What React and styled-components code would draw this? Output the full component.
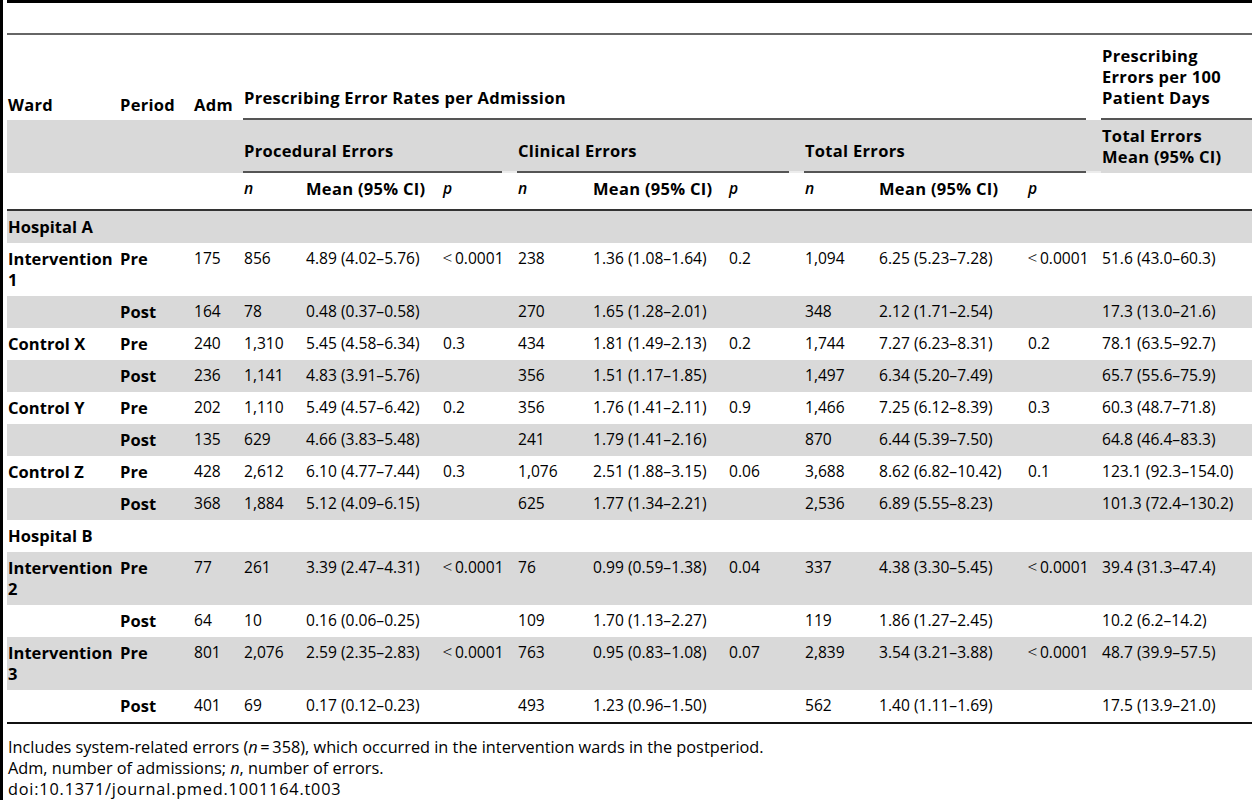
import React from "react";
import styled, { createGlobalStyle, css } from "styled-components";

const GlobalStyle = createGlobalStyle`
  html, body { margin: 0; padding: 0; background: #fff; }
  body {
    font-family: "Open Sans", "Noto Sans", "Liberation Sans", sans-serif;
    color: #000;
  }
`;

const Page = styled.div`
  box-sizing: border-box;
  min-height: 100vh;
  border-left: 3px solid #000;
  padding-left: 4px;
`;

const Caption = styled.div`
  height: 30px;
  border-top: 3px solid #000;
  border-bottom: 2px solid #666;
`;

const Table = styled.table`
  width: 100%;
  border-collapse: collapse;
  table-layout: fixed;
  font-size: 15.6px;
  line-height: 21px;
`;

const boldLabel = css`
  font-weight: 700;
  font-size: 16.5px;
  letter-spacing: 0.3px;
`;

const gapRule = (gap, gapColor) => css`
  background-image: linear-gradient(#555, #555), linear-gradient(${gapColor}, ${gapColor});
  background-size: calc(100% - ${gap}px) 2px, ${gap}px 2px;
  background-position: left bottom, right bottom;
  background-repeat: no-repeat;
`;

const HeadCell = styled.th`
  ${boldLabel}
  text-align: left;
  vertical-align: bottom;
  padding: 0 2px 0 1px;
  white-space: nowrap;
`;

const LabelHead = styled(HeadCell)`
  padding-bottom: 5px;
`;

const SpanHead = styled(HeadCell)`
  padding-bottom: 12px;
  ${gapRule(15, "#fff")}
`;

const SideHead = styled(HeadCell)`
  padding-top: 10px;
  padding-bottom: 12px;
  ${gapRule(0, "#fff")}
`;

const SubRow = styled.tr`
  background: #d9d9d9;
`;

const GroupHead = styled(HeadCell)`
  padding-bottom: 12px;
  ${gapRule(15, "#ececec")}
`;

const SubSideHead = styled(HeadCell)`
  padding-top: 5px;
  padding-bottom: 6px;
`;

const ColRow = styled.tr`
  border-bottom: 2px solid #333;
`;

const ColHead = styled(HeadCell)`
  padding-top: 5px;
  padding-bottom: 10px;
  font-style: ${(p) => (p.$italic ? "italic" : "normal")};
  font-weight: ${(p) => (p.$italic ? 600 : 700)};
  font-size: ${(p) => (p.$italic ? "15.6px" : "16.5px")};
`;

const Body = styled.tbody`
  tr:nth-child(odd) { background: #d9d9d9; }
  tr:last-child { border-bottom: 2px solid #111; }
`;

const Cell = styled.td`
  vertical-align: top;
  padding: 5px 2px 6px 1px;
  white-space: nowrap;
`;

const LabelCell = styled(Cell)`
  ${boldLabel}
  letter-spacing: 0.05px;
  white-space: normal;
`;

const Less = styled.span`
  display: inline-block;
  margin-right: 3px;
  font-weight: 300;
  transform: scaleX(1.1);
`;

const Notes = styled.div`
  margin-top: 13px;
  font-size: 16.3px;
  line-height: 21px;
  padding-left: 1px;
`;

const NoteLine = styled.div`
  letter-spacing: ${(p) => (p.$spaced ? "0.8px" : "normal")};
`;

const widths = [112, 74, 50, 62, 137, 75, 75, 136, 76, 74, 149, 74, 151];

const rows = [
  { section: "Hospital A" },
  ["Intervention 1", "Pre", "175", "856", "4.89 (4.02–5.76)", "<0.0001", "238", "1.36 (1.08–1.64)", "0.2", "1,094", "6.25 (5.23–7.28)", "<0.0001", "51.6 (43.0–60.3)"],
  ["", "Post", "164", "78", "0.48 (0.37–0.58)", "", "270", "1.65 (1.28–2.01)", "", "348", "2.12 (1.71–2.54)", "", "17.3 (13.0–21.6)"],
  ["Control X", "Pre", "240", "1,310", "5.45 (4.58–6.34)", "0.3", "434", "1.81 (1.49–2.13)", "0.2", "1,744", "7.27 (6.23–8.31)", "0.2", "78.1 (63.5–92.7)"],
  ["", "Post", "236", "1,141", "4.83 (3.91–5.76)", "", "356", "1.51 (1.17–1.85)", "", "1,497", "6.34 (5.20–7.49)", "", "65.7 (55.6–75.9)"],
  ["Control Y", "Pre", "202", "1,110", "5.49 (4.57–6.42)", "0.2", "356", "1.76 (1.41–2.11)", "0.9", "1,466", "7.25 (6.12–8.39)", "0.3", "60.3 (48.7–71.8)"],
  ["", "Post", "135", "629", "4.66 (3.83–5.48)", "", "241", "1.79 (1.41–2.16)", "", "870", "6.44 (5.39–7.50)", "", "64.8 (46.4–83.3)"],
  ["Control Z", "Pre", "428", "2,612", "6.10 (4.77–7.44)", "0.3", "1,076", "2.51 (1.88–3.15)", "0.06", "3,688", "8.62 (6.82–10.42)", "0.1", "123.1 (92.3–154.0)"],
  ["", "Post", "368", "1,884", "5.12 (4.09–6.15)", "", "625", "1.77 (1.34–2.21)", "", "2,536", "6.89 (5.55–8.23)", "", "101.3 (72.4–130.2)"],
  { section: "Hospital B" },
  ["Intervention 2", "Pre", "77", "261", "3.39 (2.47–4.31)", "<0.0001", "76", "0.99 (0.59–1.38)", "0.04", "337", "4.38 (3.30–5.45)", "<0.0001", "39.4 (31.3–47.4)"],
  ["", "Post", "64", "10", "0.16 (0.06–0.25)", "", "109", "1.70 (1.13–2.27)", "", "119", "1.86 (1.27–2.45)", "", "10.2 (6.2–14.2)"],
  ["Intervention 3", "Pre", "801", "2,076", "2.59 (2.35–2.83)", "<0.0001", "763", "0.95 (0.83–1.08)", "0.07", "2,839", "3.54 (3.21–3.88)", "<0.0001", "48.7 (39.9–57.5)"],
  ["", "Post", "401", "69", "0.17 (0.12–0.23)", "", "493", "1.23 (0.96–1.50)", "", "562", "1.40 (1.11–1.69)", "", "17.5 (13.9–21.0)"],
];

function Value({ text }) {
  if (text.startsWith("<")) {
    return (
      <>
        <Less>&lt;</Less>
        {text.slice(1)}
      </>
    );
  }
  return text;
}

export default function App() {
  return (
    <>
      <GlobalStyle />
      <Page>
        <Caption />
        <Table>
          <colgroup>
            {widths.map((w, i) => (
              <col key={i} style={{ width: w }} />
            ))}
          </colgroup>
          <thead>
            <tr>
              <LabelHead>Ward</LabelHead>
              <LabelHead>Period</LabelHead>
              <LabelHead>Adm</LabelHead>
              <SpanHead colSpan={9}>Prescribing Error Rates per Admission</SpanHead>
              <SideHead>
                Prescribing
                <br />
                Errors per 100
                <br />
                Patient Days
              </SideHead>
            </tr>
            <SubRow>
              <HeadCell />
              <HeadCell />
              <HeadCell />
              <GroupHead colSpan={3}>Procedural Errors</GroupHead>
              <GroupHead colSpan={3}>Clinical Errors</GroupHead>
              <GroupHead colSpan={3}>Total Errors</GroupHead>
              <SubSideHead>
                Total Errors
                <br />
                Mean (95% CI)
              </SubSideHead>
            </SubRow>
            <ColRow>
              <ColHead />
              <ColHead />
              <ColHead />
              {[0, 1, 2].map((g) => (
                <React.Fragment key={g}>
                  <ColHead $italic>n</ColHead>
                  <ColHead>Mean (95% CI)</ColHead>
                  <ColHead $italic>p</ColHead>
                </React.Fragment>
              ))}
              <ColHead />
            </ColRow>
          </thead>
          <Body>
            {rows.map((r, i) =>
              r.section ? (
                <tr key={i}>
                  <LabelCell colSpan={13}>{r.section}</LabelCell>
                </tr>
              ) : (
                <tr key={i}>
                  {r.map((v, j) =>
                    j < 2 ? (
                      <LabelCell key={j}>{v}</LabelCell>
                    ) : (
                      <Cell key={j}>
                        <Value text={v} />
                      </Cell>
                    )
                  )}
                </tr>
              )
            )}
          </Body>
        </Table>
        <Notes>
          <NoteLine>
            Includes system-related errors (<i>n</i>&#8201;=&#8201;358), which occurred in the intervention wards in the postperiod.
          </NoteLine>
          <NoteLine>
            Adm, number of admissions; <i>n</i>, number of errors.
          </NoteLine>
          <NoteLine $spaced>doi:10.1371/journal.pmed.1001164.t003</NoteLine>
        </Notes>
      </Page>
    </>
  );
}
